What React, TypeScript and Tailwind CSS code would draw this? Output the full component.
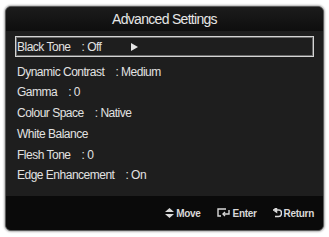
import { ReactNode } from "react";

const rows: { label: string; value?: string; h: string }[] = [
  { label: "Dynamic Contrast", value: "Medium", h: "h-[21px]" },
  { label: "Gamma", value: "0", h: "h-[20px]" },
  { label: "Colour Space", value: "Native", h: "h-[21px]" },
  { label: "White Balance", h: "h-[21px]" },
  { label: "Flesh Tone", value: "0", h: "h-[21px]" },
  { label: "Edge Enhancement", value: "On", h: "h-[19px]" },
];

function Hint({ icon, label }: { icon: ReactNode; label: string }) {
  return (
    <div className="flex items-center gap-[2px]">
      {icon}
      <span>{label}</span>
    </div>
  );
}

export default function App() {
  return (
    <div className="w-[329px] h-[237px] bg-white p-[5px] pt-[6px] font-['Liberation_Sans',Arial,sans-serif]">
      <div className="w-[319px] h-[225px] rounded-[6px] bg-[#1e1e1e] overflow-hidden flex flex-col shadow-[0_0_2px_1px_rgba(0,0,0,0.3)] border border-[#5a5a5a]">
        <div className="h-[24px] shrink-0 bg-gradient-to-b from-[#1c1c1c] to-[#0e0e0e] flex items-center justify-center text-[#e6e6e6] text-[14px] tracking-[-0.7px]">
          Advanced Settings
        </div>
        <div className="flex-1 px-[9px] pt-[5px] text-[#e2e2e2] text-[12px] tracking-[-0.5px]">
          <div className="h-[21px] flex items-center px-[1px] border border-[#d4d4d4] shadow-[inset_0_0_0_1px_#6a6a6a]">
            <span>Black Tone</span>
            <span className="ml-[11px]">: Off</span>
            <svg className="ml-[30px]" width="7" height="8" viewBox="0 0 7 8">
              <path d="M0 0 L7 4 L0 8 Z" fill="#e6e6e6" />
            </svg>
          </div>
          <div className="pt-[4px]">
            {rows.map((r) => (
              <div key={r.label} className={`${r.h} flex items-center px-[2px]`}>
                <span>{r.label}</span>
                {r.value && <span className="ml-[11px]">: {r.value}</span>}
              </div>
            ))}
          </div>
        </div>
        <div className="h-[34px] shrink-0 bg-[#0a0a0a] flex items-center justify-end gap-[16px] pr-[9px] text-[#d8d8d8] text-[10px] font-bold tracking-[-0.3px]">
          <Hint
            label="Move"
            icon={
              <svg width="9" height="10" viewBox="0 0 9 10">
                <path d="M4.5 0 L9 4 L0 4 Z M0 6 L9 6 L4.5 10 Z" fill="#d8d8d8" />
              </svg>
            }
          />
          <Hint
            label="Enter"
            icon={
              <svg width="14" height="10" viewBox="0 0 14 10" fill="none" stroke="#d8d8d8" strokeWidth="1.4">
                <path d="M9 1 L1 1 L1 8 L4 8" />
                <path d="M12 2 L12 6 L6 6" />
                <path d="M8 4 L6 6 L8 8" />
              </svg>
            }
          />
          <Hint
            label="Return"
            icon={
              <svg width="9" height="10" viewBox="0 0 9 10" fill="none" stroke="#d8d8d8" strokeWidth="1.5">
                <path d="M3 2 L6 2 Q8.5 2 8.5 5 Q8.5 8.5 5.5 8.5 L2 8.5" />
                <path d="M0.5 2 L3.5 0 L3.5 4 Z" fill="#d8d8d8" />
              </svg>
            }
          />
        </div>
      </div>
    </div>
  );
}
